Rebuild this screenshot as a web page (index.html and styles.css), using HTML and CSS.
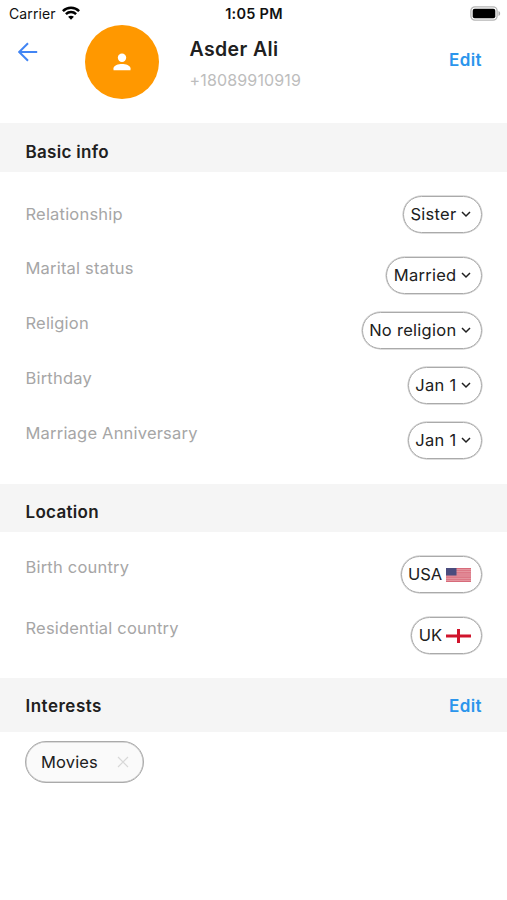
FILE: index.html
```html
<!DOCTYPE html>
<html lang="en">
<head>
<meta charset="utf-8">
<title>Contact details</title>
<link rel="stylesheet" href="styles.css">
</head>
<body>
<svg width="0" height="0" class="defs"><defs><symbol id="chevron" viewBox="0 0 10 10"><path d="M1 3 5 7 9 3" fill="none" stroke="currentColor" stroke-width="1.5"/></symbol></defs></svg>
<div class="status">
  <div class="carrier"><span>Carrier</span>
    <svg width="18" height="14" viewBox="0 0 18 14"><g fill="none" stroke="#000" stroke-width="2.5"><path d="M.9 5.1C5.4.7 12.6.7 17.1 5.1"/><path d="M3.9 8.2c2.9-2.8 7.3-2.8 10.2 0"/></g><path d="M9 13.7 6.1 10.8c1.6-1.5 4.2-1.5 5.8 0z"/></svg>
  </div>
  <div class="time">1:05 PM</div>
  <svg class="battery" width="31" height="15" viewBox="0 0 31 15"><rect x=".9" y=".9" width="26.2" height="13.2" rx="4" fill="#fff" stroke="#b5b5b5" stroke-width="1.3"/><rect x="2.7" y="2.7" width="22.6" height="9.6" rx="2"/><path d="M28.5 5c2.2.8 2.2 4.2 0 5z" fill="#aaa"/></svg>
</div>
<header class="profile">
  <svg class="back" width="20" height="20" viewBox="0 0 20 20"><path d="M19.2 10H1.5M10 1.2 1.2 10 10 18.8" fill="none" stroke="#4285f4" stroke-width="2"/></svg>
  <div class="avatar"><svg width="18" height="18" viewBox="0 0 18 18" fill="#fff"><circle cx="9" cy="4.7" r="4.2"/><path d="M.5 17.2v-2C.5 12.5 5.5 11 9 11s8.500 1.500 8.500 4.200v2z"/></svg></div>
  <div class="who"><h1>Asder Ali</h1><p>+18089910919</p></div>
  <a class="edit">Edit</a>
</header>
<h2 class="band">Basic info</h2>
<section class="rows basic">
  <div class="row centered"><span class="label">Relationship</span><span class="pill">Sister<svg class="chev"><use href="#chevron"/></svg></span></div>
  <div class="row"><span class="label">Marital status</span><span class="pill">Married<svg class="chev"><use href="#chevron"/></svg></span></div>
  <div class="row"><span class="label">Religion</span><span class="pill">No religion<svg class="chev"><use href="#chevron"/></svg></span></div>
  <div class="row"><span class="label">Birthday</span><span class="pill">Jan 1<svg class="chev"><use href="#chevron"/></svg></span></div>
  <div class="row"><span class="label">Marriage Anniversary</span><span class="pill">Jan 1<svg class="chev"><use href="#chevron"/></svg></span></div>
</section>
<h2 class="band location">Location</h2>
<section class="rows places">
  <div class="row"><span class="label">Birth country</span><span class="pill">USA<svg class="flag" viewBox="0 0 25 14"><path fill="#e9a3ac" d="M0 0h25v14H0z"/><path d="M0 .6h25M0 2.700h25M0 4.900h25M0 7h25M0 9.100h25M0 11.300h25M0 13.400h25" stroke="#d76b7a" stroke-width="1.100"/><path fill="#4b4c7e" d="M0 0h10.500v7.500H0z"/></svg></span></div>
  <div class="row"><span class="label">Residential country</span><span class="pill">UK<svg class="flag" viewBox="0 0 25 14"><path fill="#fff" d="M0 0h25v14H0z"/><path fill="#d0142c" d="M11 0h3v5.600h11v2.800H14V14h-3V8.400H0V5.600h11z"/></svg></span></div>
</section>
<h2 class="band interests"><span>Interests</span><a class="edit">Edit</a></h2>
<div class="chips"><span class="chip">Movies<svg width="12" height="12" viewBox="0 0 12 12"><path d="m1 1 10 10M11 1 1 11" stroke="#d8d8d8" stroke-width="1.200"/></svg></span></div>
</body>
</html>
```
FILE: styles.css
```css
* { box-sizing: border-box; }
body { margin: 0; background: #fff; color: #202020; font-family: Inter, "Liberation Sans", sans-serif; font-size: 16.500px; }
h1, h2, p { margin: 0; }
svg { display: block; flex: none; }
.defs { position: absolute; }
.status { height: 25px; display: grid; grid-template-columns: 1fr auto 1fr; align-items: center; padding: 3px 6px 0 9px; font-size: 14px; line-height: 22px; color: #111; }
.carrier { display: flex; align-items: center; gap: 6px; letter-spacing: .1px; }
.carrier svg { margin-top: -3px; }
.time { font-size: 14.500px; font-weight: 600; letter-spacing: .25px; margin-left: -2px; }
.battery { justify-self: end; margin-top: -2px; }
.profile { height: 98px; display: flex; align-items: flex-start; padding: 0 25px 0 18px; }
.back { margin-top: 17px; }
.avatar { width: 74px; height: 74px; margin-left: 47px; border-radius: 50%; background: #ff9800; display: flex; align-items: center; justify-content: center; }
.who { margin-left: 30.500px; padding-top: 12px; flex: 1; }
.who h1 { font-size: 19.500px; line-height: 24px; font-weight: 600; letter-spacing: .4px; }
.who p { margin-top: 8px; font-size: 16px; line-height: 22px; color: #bdbdbd; letter-spacing: .15px; }
.edit { color: #2b95ec; font-size: 17px; font-weight: 600; line-height: 22px; letter-spacing: .4px; }
.profile .edit { margin-top: 24px; }
.band { height: 49px; padding: 9px 25px 0 25.500px; display: flex; align-items: center; justify-content: space-between; background: #f5f5f5; font-size: 17px; line-height: 22px; font-weight: 600; letter-spacing: .3px; }
.location { height: 48px; padding-top: 7px; }
.interests { height: 54px; padding-top: 2px; letter-spacing: .5px; }
.rows { padding: 24px 25px 0 25.500px; display: grid; align-content: start; }
.basic { height: 312px; grid-template-rows: 61px repeat(4, 55px); }
.places { height: 146px; grid-template-rows: 61px 61px; }
.row { display: flex; align-items: flex-start; justify-content: space-between; }
.label { color: #a6a6a6; line-height: 22px; letter-spacing: .2px; }
.basic .label { margin-top: 0; }
.centered .label, .basic .centered .label { margin-top: 7px; }
.pill { height: 37px; display: flex; align-items: center; border: 1px solid #aaa; box-shadow: 0 0 0 .5px #bbb; border-radius: 19px; padding: 0 10px 1px 6.500px; letter-spacing: .28px; }
.places .pill { letter-spacing: -.1px; }
.chev { width: 10px; height: 10px; margin-left: 4.500px; }
.flag { width: 25px; height: 14px; margin: 1px 0 0 4px; }
.chips { padding: 9px 25px; display: flex; }
.chip { width: 119px; height: 42px; display: flex; align-items: center; justify-content: space-between; padding: 0 14px 0 15px; border: 1px solid #aaa; box-shadow: inset 0 0 0 .5px #bbb; border-radius: 21px; background: #fafafa; letter-spacing: .15px; }
```
